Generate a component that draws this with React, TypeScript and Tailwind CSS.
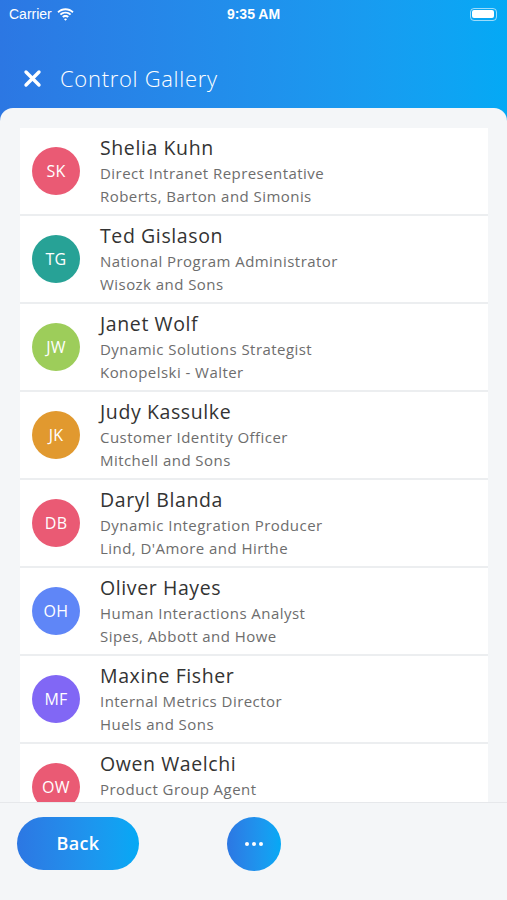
import React from 'react';

type Contact = { initials: string; name: string; title: string; company: string; color: string };

const contacts: Contact[] = [
  { initials: 'SK', name: 'Shelia Kuhn', title: 'Direct Intranet Representative', company: 'Roberts, Barton and Simonis', color: 'bg-[#ea5a74]' },
  { initials: 'TG', name: 'Ted Gislason', title: 'National Program Administrator', company: 'Wisozk and Sons', color: 'bg-[#27a296]' },
  { initials: 'JW', name: 'Janet Wolf', title: 'Dynamic Solutions Strategist', company: 'Konopelski - Walter', color: 'bg-[#9dcd5a]' },
  { initials: 'JK', name: 'Judy Kassulke', title: 'Customer Identity Officer', company: 'Mitchell and Sons', color: 'bg-[#e1992f]' },
  { initials: 'DB', name: 'Daryl Blanda', title: 'Dynamic Integration Producer', company: "Lind, D'Amore and Hirthe", color: 'bg-[#ea5a74]' },
  { initials: 'OH', name: 'Oliver Hayes', title: 'Human Interactions Analyst', company: 'Sipes, Abbott and Howe', color: 'bg-[#5f86f7]' },
  { initials: 'MF', name: 'Maxine Fisher', title: 'Internal Metrics Director', company: 'Huels and Sons', color: 'bg-[#8167f5]' },
  { initials: 'OW', name: 'Owen Waelchi', title: 'Product Group Agent', company: 'Nikolaus Group', color: 'bg-[#ea5a74]' },
];

export default function App() {
  return (
    <div className="w-[507px] h-[900px] flex flex-col overflow-hidden bg-gradient-to-r from-[#2c77e3] to-[#04a9f5] font-['Open_Sans',sans-serif]">
      {/* Status bar */}
      <div className="h-[28px] flex items-center justify-between px-[9px] text-white shrink-0">
        <div className="flex items-center gap-[5px] w-[120px]">
          <span className="text-[14px] font-['Liberation_Sans',sans-serif]">Carrier</span>
          <svg width="17" height="13" viewBox="0 0 17 13" fill="white">
            <path d="M8.5 2.2c2.6 0 5 1 6.8 2.7l1.3-1.4C14.4 1.4 11.6.2 8.5.2S2.6 1.4.4 3.5l1.3 1.4C3.5 3.2 5.9 2.2 8.5 2.2z" />
            <path d="M8.5 5.6c1.7 0 3.2.6 4.4 1.7l1.3-1.4C12.7 4.5 10.7 3.7 8.5 3.7S4.3 4.5 2.8 5.9l1.3 1.4C5.3 6.2 6.8 5.6 8.5 5.6z" />
            <path d="M8.5 8.9c.8 0 1.5.3 2 .8l1.4-1.4C11 7.4 9.8 7 8.5 7S6 7.4 5.1 8.3l1.4 1.4c.5-.5 1.2-.8 2-.8z" />
            <path d="M8.5 12.8l1.5-1.6c-.4-.4-.9-.6-1.5-.6s-1.1.2-1.5.6z" />
          </svg>
        </div>
        <span className="text-[14px] font-bold font-['Liberation_Sans',sans-serif]">9:35 AM</span>
        <div className="w-[120px] flex justify-end pr-[1px]">
          <div className="w-[27px] h-[13px] rounded-[4px] border border-white/60 p-[1.5px] flex items-center">
            <div className="h-full w-full rounded-[2px] bg-white" />
          </div>
        </div>
      </div>

      {/* Nav */}
      <div className="h-[80px] flex items-center pl-[23px] pt-[30px] pb-[10px] shrink-0 text-white">
        <svg width="19" height="19" viewBox="0 0 19 19" stroke="white" strokeWidth="3.4" strokeLinecap="round">
          <path d="M3 3l13 13M16 3L3 16" />
        </svg>
        <span className="ml-[18px] text-[22px] font-light tracking-[0.7px]">Control Gallery</span>
      </div>

      {/* Content card */}
      <div className="flex-1 flex flex-col bg-[#f4f6f8] rounded-t-[13px] overflow-hidden">
        <div className="flex-1 overflow-hidden pt-[20px] px-[20px] pr-[19px]">
          <div className="flex flex-col gap-[2px] bg-[#eceef0]">
            {contacts.map((c) => (
              <div key={c.initials + c.name} className="h-[86px] shrink-0 bg-white flex items-center pl-[12px]">
                <div className={`w-[48px] h-[48px] rounded-full ${c.color} flex items-center justify-center text-white text-[16px] tracking-[0.3px] shrink-0`}>
                  {c.initials}
                </div>
                <div className="ml-[20px] flex flex-col">
                  <span className="text-[19.5px] leading-[28px] tracking-[0.6px] text-[#333333]">{c.name}</span>
                  <span className="text-[15px] leading-[23px] tracking-[0.45px] text-[#6d6d6d]">{c.title}</span>
                  <span className="text-[15px] leading-[23px] tracking-[0.45px] text-[#6d6d6d]">{c.company}</span>
                </div>
              </div>
            ))}
          </div>
        </div>

        {/* Footer */}
        <div className="h-[98px] shrink-0 bg-[#f4f6f8] border-t border-[#e6e8eb] flex items-start pt-[14px] pl-[17px]">
          <button className="w-[122px] h-[53px] rounded-full bg-gradient-to-r from-[#2c77e3] to-[#04a9f5] text-white text-[18px] font-semibold tracking-[0.4px]">
            Back
          </button>
          <button className="ml-[88px] w-[54px] h-[54px] rounded-full bg-gradient-to-r from-[#2c77e3] to-[#04a9f5] flex items-center justify-center gap-[3px]">
            <span className="w-[4px] h-[4px] rounded-full bg-white" />
            <span className="w-[4px] h-[4px] rounded-full bg-white" />
            <span className="w-[4px] h-[4px] rounded-full bg-white" />
          </button>
        </div>
      </div>
    </div>
  );
}
